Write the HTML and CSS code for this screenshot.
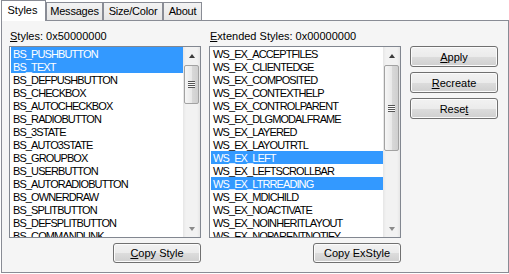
FILE: index.html
```html
<!DOCTYPE html>
<html lang="en">
<head>
<meta charset="utf-8"/>
<title>Styles</title>
<link rel="stylesheet" href="styles.css">
</head>
<body>
<div class="tabs">
  <div class="tab active">Styles</div>
  <div class="tab messages">Messages</div>
  <div class="tab size">Size/Color</div>
  <div class="tab about">About</div>
</div>
<div class="panel">
  <div class="col">
    <div class="label"><u>S</u>tyles: 0x50000000</div>
    <div class="listbox">
      <ul class="items">
        <li class="sel">BS_PUSHBUTTON</li>
        <li class="sel">BS_TEXT</li>
        <li>BS_DEFPUSHBUTTON</li>
        <li>BS_CHECKBOX</li>
        <li>BS_AUTOCHECKBOX</li>
        <li>BS_RADIOBUTTON</li>
        <li>BS_3STATE</li>
        <li>BS_AUTO3STATE</li>
        <li>BS_GROUPBOX</li>
        <li>BS_USERBUTTON</li>
        <li>BS_AUTORADIOBUTTON</li>
        <li>BS_OWNERDRAW</li>
        <li>BS_SPLITBUTTON</li>
        <li>BS_DEFSPLITBUTTON</li>
        <li>BS_COMMANDLINK</li>
      </ul>
      <div class="scroll">
        <div class="arrow up"></div>
        <div class="track"><div class="thumb short"><span class="grip"></span></div></div>
        <div class="arrow down"></div>
      </div>
    </div>
    <button class="btn copy"><u>C</u>opy Style</button>
  </div>
  <div class="col second">
    <div class="label"><u>E</u>xtended Styles: 0x00000000</div>
    <div class="listbox">
      <ul class="items">
        <li>WS_EX_ACCEPTFILES</li>
        <li>WS_EX_CLIENTEDGE</li>
        <li>WS_EX_COMPOSITED</li>
        <li>WS_EX_CONTEXTHELP</li>
        <li>WS_EX_CONTROLPARENT</li>
        <li>WS_EX_DLGMODALFRAME</li>
        <li>WS_EX_LAYERED</li>
        <li>WS_EX_LAYOUTRTL</li>
        <li class="sel">WS_EX_LEFT</li>
        <li>WS_EX_LEFTSCROLLBAR</li>
        <li class="sel">WS_EX_LTRREADING</li>
        <li>WS_EX_MDICHILD</li>
        <li>WS_EX_NOACTIVATE</li>
        <li>WS_EX_NOINHERITLAYOUT</li>
        <li>WS_EX_NOPARENTNOTIFY</li>
      </ul>
      <div class="scroll">
        <div class="arrow up"></div>
        <div class="track"><div class="thumb long"><span class="grip"></span></div></div>
        <div class="arrow down"></div>
      </div>
    </div>
    <button class="btn copy">Copy ExStyle</button>
  </div>
  <div class="side">
    <button class="btn"><u>A</u>pply</button>
    <button class="btn"><u>R</u>ecreate</button>
    <button class="btn">Rese<u>t</u></button>
  </div>
</div>
</body>
</html>
```

FILE: styles.css
```css
body {
  margin: 0;
  background: #fff;
  font-family: "Liberation Sans", Arial, sans-serif;
  font-size: 11px;
  line-height: 13px;
  color: #000;
}

.tabs { display: flex; height: 20px; padding-left: 1px; }
.tab {
  box-sizing: border-box;
  height: 18px;
  margin-top: 2px;
  border: 1px solid #898c95;
  border-bottom: none;
  background: linear-gradient(#f3f3f3, #e6e6e6);
  line-height: 17px;
  text-align: center;
  letter-spacing: -0.2px;
  white-space: nowrap;
}
.tab.messages { width: 57px; }
.tab.size { width: 60px; }
.tab.about { width: 39px; }
.tab.active {
  position: relative;
  z-index: 1;
  width: 45px;
  height: 21px;
  margin: 0 0 -1px 0;
  padding: 3px 2px 0 0;
  background: #fff;
  line-height: 13px;
  letter-spacing: 0;
}

.panel {
  display: flex;
  width: 508px;
  height: 253px;
  margin-left: 1px;
  box-sizing: border-box;
  border: 1px solid #898c95;
  background: #f5f5f5;
  padding: 9px 0 0 7px;
}

.col { display: flex; flex-direction: column; width: 192px; }
.col.second { margin-left: 8px; }
.label { padding-left: 1px; height: 13px; margin-bottom: 3px; }

.listbox {
  display: flex;
  height: 192px;
  box-sizing: border-box;
  border: 1px solid #828790;
  background: #fff;
}
.items {
  flex: 1;
  margin: 0;
  padding: 0 0 0 1px;
  list-style: none;
  overflow: hidden;
}
.items li {
  height: 13px;
  padding: 1px 0 0 2px;
  box-sizing: border-box;
  line-height: 12px;
  letter-spacing: -0.9px;
  white-space: nowrap;
}
.items li.sel { background: #3399ff; color: #fff; }

.scroll {
  display: flex;
  flex-direction: column;
  width: 17px;
  background: linear-gradient(to right, #e6e6e6, #f2f2f2 3px, #f2f2f2 14px, #e6e6e6);
}
.arrow { height: 17px; display: flex; align-items: center; justify-content: center; }
.arrow::after {
  content: "";
  border-left: 3.5px solid transparent;
  border-right: 3.5px solid transparent;
}
.arrow.up::after { border-bottom: 4px solid #3c3c3c; }
.arrow.down::after { border-top: 4px solid #8a8a8a; }
.track { flex: 1; padding: 1px 1px 0 1px; }
.thumb {
  display: flex;
  align-items: center;
  justify-content: center;
  box-sizing: border-box;
  border: 1px solid #a2a2a2;
  border-radius: 2px;
  background: linear-gradient(to right, #f6f6f6, #e9e9e9 50%, #d9d9d9 51%, #cfcfcf);
}
.thumb.short { height: 39px; }
.thumb.long { height: 86px; }
.grip {
  width: 7px;
  height: 7px;
  background: repeating-linear-gradient(#555 0 1px, #fafafa 1px 2px);
}

.btn {
  display: block;
  width: 88px;
  height: 21px;
  padding: 0;
  border: 1px solid #707070;
  border-radius: 3px;
  background: linear-gradient(#f2f2f2, #ebebeb 50%, #dddddd 50%, #cfcfcf);
  box-shadow: inset 0 0 0 1px #fbfbfb;
  font-family: inherit;
  font-size: 11px;
  color: #000;
}
.btn.copy { align-self: flex-end; margin-top: 5px; height: 20px; }

.side { margin-left: 9px; padding-top: 16px; display: flex; flex-direction: column; gap: 5px; }
```
